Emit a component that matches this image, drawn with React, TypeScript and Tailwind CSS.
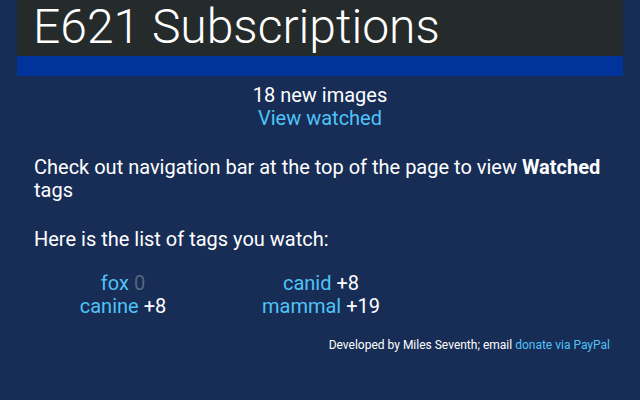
import React from "react";

const tags: [string, string, boolean][] = [
  ["fox", "0", false],
  ["canid", "+8", true],
  ["canine", "+8", true],
  ["mammal", "+19", true],
];

export default function App() {
  return (
    <div
      className="w-[640px] h-[400px] bg-[#172d55] text-white px-[17px]"
      style={{ fontFamily: "Roboto, 'Liberation Sans', sans-serif" }}
    >
      <div className="bg-[#252a2b] h-[56px] pl-[16px] overflow-visible">
        <h1 className="text-[48px] font-light leading-[54px] text-white whitespace-nowrap">E621 Subscriptions</h1>
      </div>
      <div className="bg-[#01349a] h-[20px]" />
      <div className="px-[17px] text-[20px] leading-[23px]">
        <div className="text-center mt-[8px]">
          <div>18 new images</div>
          <div className="text-[#4fc3f7]">View watched</div>
        </div>
        <p className="mt-[26px]">
          Check out navigation bar at the top of the page to view <b className="font-bold">Watched</b> tags
        </p>
        <p className="mt-[26px]">Here is the list of tags you watch:</p>
        <div className="mt-[21px] grid grid-cols-[178px_182px] gap-x-[18px]">
          {tags.map(([name, count, pos]) => (
            <div key={name} className="text-center">
              <span className="text-[#4fc3f7]">{name}</span>{" "}
              <span className={pos ? "text-white" : "text-[#55667f]"}>{count}</span>
            </div>
          ))}
        </div>
        <div className="mt-[19px] text-right text-[12px] leading-[16px] mr-[-4px]">
          Developed by Miles Seventh; email <span className="text-[#4fc3f7]">donate via PayPal</span>
        </div>
      </div>
    </div>
  );
}
